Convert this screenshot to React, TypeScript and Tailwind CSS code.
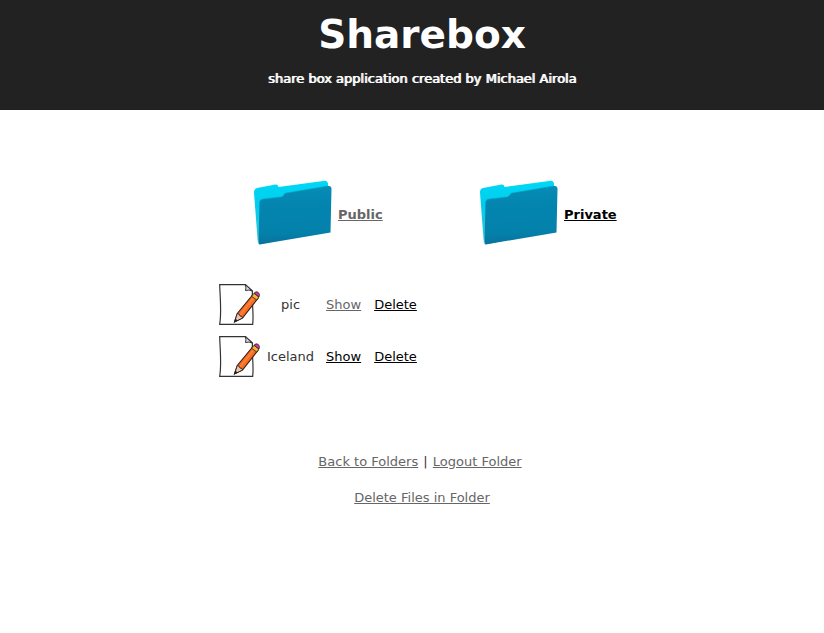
import React from "react";

type FileRow = { name: string; visited: boolean };

const files: FileRow[] = [
  { name: "pic", visited: true },
  { name: "Iceland", visited: false },
];

function FolderIcon() {
  return (
    <svg width="80" height="66" viewBox="0 0 80 66" aria-hidden="true" className="shrink-0">
      <defs>
        <linearGradient id="folderBack" x1="0" y1="0" x2="0" y2="1">
          <stop offset="0" stopColor="#00d8f6" />
          <stop offset="0.4" stopColor="#00cdeb" />
          <stop offset="1" stopColor="#35c3da" />
        </linearGradient>
        <linearGradient id="folderFront" x1="0.5" y1="0" x2="0.55" y2="1">
          <stop offset="0" stopColor="#078db6" />
          <stop offset="0.3" stopColor="#0385b0" />
          <stop offset="0.8" stopColor="#0381ab" />
          <stop offset="1" stopColor="#0b6f99" />
        </linearGradient>
      </defs>
      <path
        d="M1 12.5Q.8 9 4 8L22.500 4.600Q25 4.300 25.500 7L72 .7Q74.500.5 75 3.500L77 50L6 64.500Q4.800 63 4.600 60Z"
        fill="url(#folderBack)"
      />
      <path
        d="M6.500 22Q6.500 20 9 19.200L28 17Q31 16 32 13.300L75 6Q78.500 5.500 78.500 9L77.500 52.500L6.500 64.500Q5.500 62 5.700 56Z"
        fill="url(#folderFront)"
      />
      <path d="M6.800 21.500Q7.500 19.500 10 19L28 17Q31 16 32 13.300L75 6" fill="none" stroke="#0a9fc4" strokeWidth="0.6" />
    </svg>
  );
}

function FileIcon() {
  return (
    <svg width="42" height="42" viewBox="0 0 42 42" aria-hidden="true" className="block">
      <path
        d="M.7.7H26.500L33.500 7C32.500 18 35 29 33.700 40.300H.7C2.800 28 1 13 .7.7Z"
        fill="#fff"
        stroke="#333"
        strokeWidth="1.2"
      />
      <path d="M26.300.8Q27.500 4 26.500 6.500Q30 5.200 33.400 7.200Z" fill="#dedeee" stroke="#333" strokeWidth="1" />
      <path d="M15.500 38L18.300 29.500L34 10.500L39 14.300L23.500 34Z" fill="#fc6a1c" stroke="#2b211d" strokeWidth="1.1" />
      <path d="M20.500 30.500L34.500 12.500L36 13.500L21.500 32Z" fill="#ff8238" />
      <path d="M15.500 38L18.300 29.500Q21 30 21 32Q23.500 32 23.500 34Z" fill="#edc5b5" stroke="#2b211d" strokeWidth="0.9" />
      <path d="M15 38.500L16.300 34.500L18.700 36.500Z" fill="#222" />
      <path d="M32.600 12.300L35 9.200L40 13L37.700 16Z" fill="#f2b52c" stroke="#2b211d" strokeWidth="0.8" />
      <path d="M35 9.200Q37 7 39 8.200Q41.400 10 40 13Z" fill="#d03aa6" stroke="#2b211d" strokeWidth="0.8" />
    </svg>
  );
}

function FolderLink({ label, visited }: { label: string; visited: boolean }) {
  return (
    <div className="flex items-center gap-[5px]">
      <FolderIcon />
      <a href="#" className={`mt-1 font-bold underline ${visited ? "text-[#666]" : "text-black"}`}>
        {label}
      </a>
    </div>
  );
}

export default function App() {
  return (
    <div className="min-h-screen bg-white font-['Verdana','DejaVu_Sans',sans-serif] text-[13px] leading-[18px] text-[#333]">
      <header className="bg-[#222] pt-2 pb-[22px] pl-5 text-center text-white">
        <h1 className="text-[39px] leading-[54px] font-bold">Sharebox</h1>
        <p className="mt-2 [text-shadow:1px_0_currentColor]">
          share box application created by Michael Airola
        </p>
      </header>

      <main className="pt-[70px] pl-5">
        <div className="mx-auto w-full max-w-[416px]">
          <nav className="grid grid-cols-[226px_auto] pl-[39px]">
            <FolderLink label="Public" visited />
            <FolderLink label="Private" visited={false} />
          </nav>

          <table className="mt-[33px]">
            <tbody>
              {files.map((file) => (
                <tr key={file.name}>
                  <td className="py-[5px] pl-[5px]">
                    <FileIcon />
                  </td>
                  <td className="px-[6px] text-center">{file.name}</td>
                  <td className="px-[6px]">
                    <a href="#" className={`underline ${file.visited ? "text-[#666]" : "text-black"}`}>
                      Show
                    </a>
                  </td>
                  <td className="px-[7px]">
                    <a href="#" className="text-black underline">
                      Delete
                    </a>
                  </td>
                </tr>
              ))}
            </tbody>
          </table>
        </div>

        <footer className="mt-[70px] text-center">
          <p className="pr-1">
            <a href="#" className="text-[#666] underline">Back to Folders</a>
            <span className="px-px">{" | "}</span>
            <a href="#" className="text-[#666] underline">Logout Folder</a>
          </p>
          <p className="mt-[18px]">
            <a href="#" className="text-[#666] underline">Delete Files in Folder</a>
          </p>
        </footer>
      </main>
    </div>
  );
}
